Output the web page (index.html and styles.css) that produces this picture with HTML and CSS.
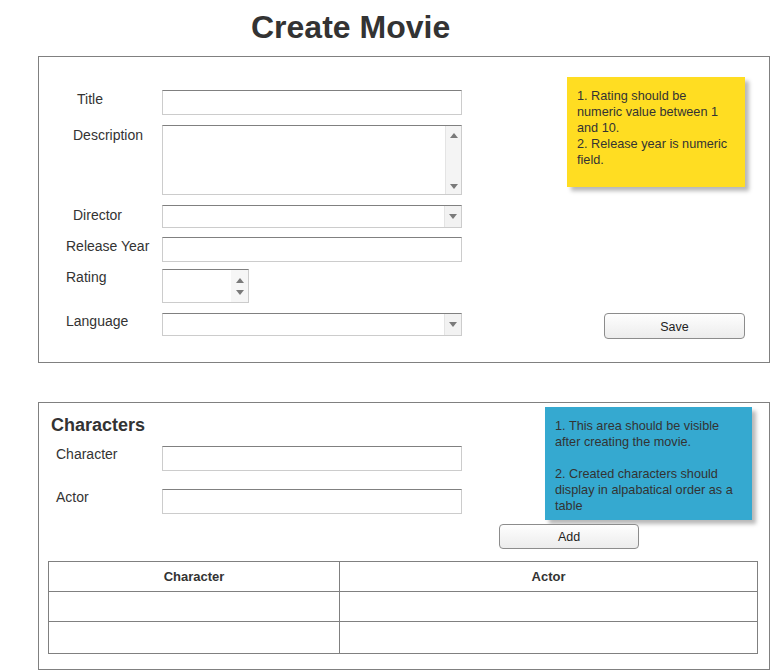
FILE: index.html
```html
<!DOCTYPE html>
<html lang="en">
<head>
<meta charset="utf-8">
<title>Create Movie</title>
<link rel="stylesheet" href="styles.css">
</head>
<body>
<h1 class="page-title">Create Movie</h1>

<section class="panel movie-panel">
  <div class="form">
    <div class="row row-title">
      <span class="lbl ind-38">Title</span>
      <div class="field text-field"></div>
    </div>
    <div class="row row-desc">
      <span class="lbl lbl-low ind-34">Description</span>
      <div class="field textarea-field">
        <div class="scroll">
          <svg class="tri" width="8" height="5" viewBox="0 0 8 5"><path d="M0 5 L4 0 L8 5 Z"/></svg>
          <svg class="tri" width="8" height="5" viewBox="0 0 8 5"><path d="M0 0 L4 5 L8 0 Z"/></svg>
        </div>
      </div>
    </div>
    <div class="row row-director">
      <span class="lbl lbl-low ind-34">Director</span>
      <div class="field select-field">
        <div class="drop"><svg class="tri" width="8" height="5" viewBox="0 0 8 5"><path d="M0 0 L4 5 L8 0 Z"/></svg></div>
      </div>
    </div>
    <div class="row row-year">
      <span class="lbl ind-27">Release Year</span>
      <div class="field text-field"></div>
    </div>
    <div class="row row-rating">
      <span class="lbl lbl-high ind-27">Rating</span>
      <div class="field spin-field">
        <div class="spin">
          <svg class="tri" width="8" height="5" viewBox="0 0 8 5"><path d="M0 5 L4 0 L8 5 Z"/></svg>
          <svg class="tri" width="8" height="5" viewBox="0 0 8 5"><path d="M0 0 L4 5 L8 0 Z"/></svg>
        </div>
      </div>
    </div>
    <div class="row row-lang">
      <span class="lbl lbl-high ind-27">Language</span>
      <div class="field select-field">
        <div class="drop"><svg class="tri" width="8" height="5" viewBox="0 0 8 5"><path d="M0 0 L4 5 L8 0 Z"/></svg></div>
      </div>
    </div>
  </div>
  <div class="side">
    <div class="note note-yellow">1. Rating should be<br>numeric value between 1<br>and 10.<br>2. Release year is numeric<br>field.</div>
    <button class="btn btn-save">Save</button>
  </div>
</section>

<section class="panel chars-panel">
  <div class="chars-top">
    <div class="chars-form">
      <h2 class="chars-title">Characters</h2>
      <div class="row row-char">
        <span class="lbl lbl-high ind-17">Character</span>
        <div class="field text-field"></div>
      </div>
      <div class="row row-actor">
        <span class="lbl lbl-high ind-17">Actor</span>
        <div class="field text-field"></div>
      </div>
    </div>
    <div class="chars-side">
      <div class="note note-blue">1. This area should be visible<br>after creating the movie.<br><br>2. Created characters should<br>display in alpabatical order as a<br>table</div>
      <button class="btn btn-add">Add</button>
    </div>
  </div>
  <table class="chars-table">
    <thead>
      <tr class="head-row"><th class="col-char">Character</th><th>Actor</th></tr>
    </thead>
    <tbody>
      <tr class="body-row"><td></td><td></td></tr>
      <tr class="body-row last"><td></td><td></td></tr>
    </tbody>
  </table>
</section>
</body>
</html>
```

FILE: styles.css
```css
* { box-sizing: border-box; }

html, body {
  margin: 0;
  padding: 0;
  background: #ffffff;
}

body {
  width: 770px;
  font-family: "Liberation Sans", Arial, sans-serif;
  color: #333333;
}

.page-title {
  margin: 0;
  padding: 9px 0 0 251px;
  height: 56px;
  font-size: 32px;
  line-height: 36px;
  font-weight: bold;
  color: #333333;
}

.panel {
  margin-left: 38px;
  width: 732px;
  border: 1px solid #808080;
  background: #ffffff;
}

/* ---------- Movie panel ---------- */
.movie-panel {
  display: flex;
  height: 307px;
}

.form {
  width: 423px;
  padding-top: 33px;
  display: flex;
  flex-direction: column;
}

.row {
  display: flex;
  align-items: flex-start;
}

.lbl {
  width: 123px;
  flex: none;
  font-size: 14px;
  line-height: 16px;
  padding-top: 1px;
  color: #333333;
  white-space: nowrap;
}

.lbl-low { padding-top: 2px; }
.lbl-high { padding-top: 0; }

.ind-38 { padding-left: 38px; }
.ind-34 { padding-left: 34px; }
.ind-27 { padding-left: 27px; }
.ind-17 { padding-left: 17px; }

.field {
  position: relative;
  width: 300px;
  background: #ffffff;
  border: 1px solid #cccccc;
  border-top-color: #808080;
  display: flex;
  justify-content: flex-end;
}

.text-field { height: 25px; }
.textarea-field { height: 70px; }
.select-field { height: 23px; }
.spin-field { height: 34px; width: 87px; }

.row-title { margin-bottom: 10px; }
.row-desc { margin-bottom: 10px; }
.row-director { margin-bottom: 9px; }
.row-year { margin-bottom: 7px; }
.row-rating { margin-bottom: 10px; }

.tri { display: block; fill: #7a7a7a; }

.scroll {
  width: 16px;
  height: 100%;
  background: #f4f4f4;
  border-left: 1px solid #e4e4e4;
  display: flex;
  flex-direction: column;
  justify-content: space-between;
  align-items: center;
  padding: 7px 0 5px;
}

.drop {
  width: 17px;
  height: 100%;
  background: #f2f2f2;
  border-left: 1px solid #e4e4e4;
  display: flex;
  align-items: center;
  justify-content: center;
}

.spin {
  width: 17px;
  height: 100%;
  background: #f6f6f6;
  display: flex;
  flex-direction: column;
  justify-content: space-between;
  align-items: center;
  padding: 8px 0 7px;
}

.side {
  flex: 1;
  display: flex;
  flex-direction: column;
  align-items: flex-end;
  padding: 20px 24px 23px 0;
}

.note {
  font-size: 12.7px;
  line-height: 16px;
  color: #333333;
  white-space: nowrap;
  padding: 11px 10px 9px;
  box-shadow: 4px 4px 4px rgba(0, 0, 0, 0.28);
}

.note-yellow {
  width: 178px;
  height: 110px;
  background: #ffdd22;
}

.btn {
  font-family: "Liberation Sans", Arial, sans-serif;
  font-size: 12.5px;
  color: #222222;
  background: linear-gradient(#fefefe, #ececec);
  border: 1px solid #8c8c8c;
  border-radius: 4px;
  padding: 1px 0 0;
  line-height: 22px;
  text-align: center;
}

.btn-save {
  margin-top: auto;
  width: 141px;
  height: 26px;
}

/* ---------- Characters panel ---------- */
.chars-panel {
  margin-top: 39px;
  height: 268px;
  display: flex;
  flex-direction: column;
}

.chars-top {
  display: flex;
  height: 146px;
}

.chars-form {
  width: 423px;
  display: flex;
  flex-direction: column;
}

.chars-title {
  margin: 11px 0 10px;
  padding-left: 12px;
  font-size: 18px;
  line-height: 22px;
  font-weight: bold;
  color: #333333;
}

.row-char { margin-bottom: 18px; }

.chars-side {
  display: flex;
  flex-direction: column;
  align-items: flex-start;
  padding-top: 4px;
}

.note-blue {
  margin-left: 83px;
  width: 207px;
  height: 113px;
  background: #35a9d0;
}

.btn-add {
  margin-top: 4px;
  margin-left: 37px;
  width: 140px;
  height: 25px;
}

.chars-table {
  margin: 12px 0 0 9px;
  width: 710px;
  border-collapse: collapse;
  table-layout: fixed;
}

.chars-table th,
.chars-table td {
  border: 1px solid #808080;
  padding: 0;
}

.chars-table th {
  font-size: 13px;
  font-weight: bold;
  color: #333333;
  text-align: center;
}

.col-char { width: 291px; }

.head-row { height: 30px; }
.body-row { height: 30px; }
.body-row.last { height: 32px; }
```
